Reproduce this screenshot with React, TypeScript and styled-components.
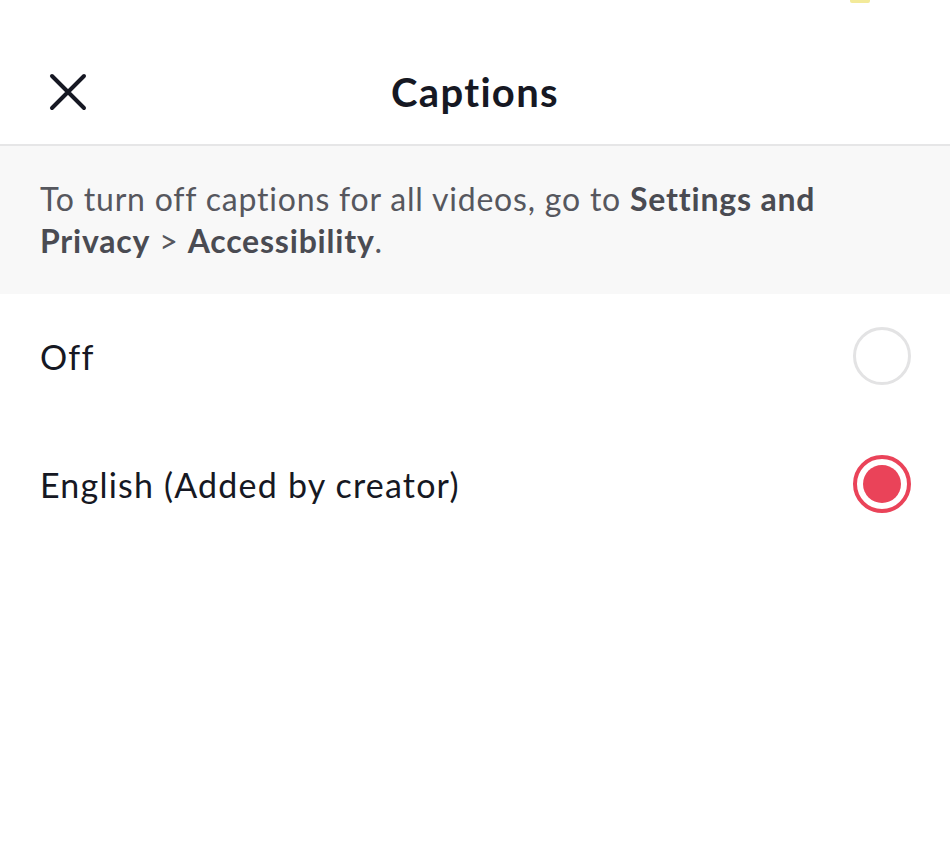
import React, { useState } from 'react';
import styled, { createGlobalStyle } from 'styled-components';

const GlobalStyle = createGlobalStyle`
  html, body {
    margin: 0;
    padding: 0;
    background: #ffffff;
  }
  body {
    font-family: Lato, "Liberation Sans", sans-serif;
    color: #161823;
  }
`;

const options = [
  { id: 'off', label: 'Off' },
  { id: 'en', label: 'English (Added by creator)' },
];

const App: React.FC = () => {
  const [selected, setSelected] = useState('en');

  return (
    <>
      <GlobalStyle />
      <Page>
        <StatusMark />
        <Header>
          <CloseButton aria-label="Close">
            <svg width="38" height="38" viewBox="0 0 38 38">
              <path d="M3 3 L35 35 M35 3 L3 35" stroke="#161823" strokeWidth="4" strokeLinecap="round" />
            </svg>
          </CloseButton>
          <Title>Captions</Title>
        </Header>
        <Notice>
          <NoticeLine>
            To turn off captions for all videos, go to <strong>Settings and</strong>
          </NoticeLine>
          <NoticeLine>
            <strong>Privacy</strong> &gt; <strong>Accessibility</strong>.
          </NoticeLine>
        </Notice>
        <List>
          {options.map(opt => (
            <Row key={opt.id} onClick={() => setSelected(opt.id)}>
              <Label>{opt.label}</Label>
              <Radio checked={selected === opt.id} />
            </Row>
          ))}
        </List>
      </Page>
    </>
  );
};

const Page = styled.div`
  position: relative;
  width: 950px;
  min-height: 865px;
  background: #fff;
`;

const StatusMark = styled.div`
  position: absolute;
  top: 0;
  left: 850px;
  width: 20px;
  height: 3px;
  background: #f3ea9a;
  border-radius: 0 0 2px 2px;
`;

const Header = styled.div`
  position: relative;
  height: 146px;
  padding-top: 40px;
  box-sizing: border-box;
  display: flex;
  align-items: center;
  justify-content: center;
  border-bottom: 2px solid #e6e6e7;
`;

const CloseButton = styled.button`
  position: absolute;
  left: 49px;
  top: 73px;
  padding: 0;
  border: none;
  background: none;
  display: flex;
  cursor: pointer;
`;

const Title = styled.h1`
  margin: 0;
  font-size: 40px;
  font-weight: 700;
  color: #161823;
  letter-spacing: 1.3px;
`;

const Notice = styled.div`
  background: #f8f8f8;
  padding: 32px 40px 32px 40px;
  font-size: 32px;
  line-height: 42px;
  letter-spacing: 0.8px;
  color: #56575e;

  strong {
    font-weight: 700;
    color: #4a4b52;
  }
`;

const NoticeLine = styled.div`
  white-space: nowrap;
`;

const List = styled.div`
  display: flex;
  flex-direction: column;
  gap: 4px;
`;

const Row = styled.div`
  display: flex;
  align-items: center;
  justify-content: space-between;
  height: 124px;
  padding: 0 39px 0 40px;
  cursor: pointer;
`;

const Label = styled.span`
  font-size: 34px;
  letter-spacing: 1.2px;
  color: #161823;
`;

const Radio = styled.span<{ checked: boolean }>`
  width: 58px;
  height: 58px;
  box-sizing: border-box;
  border-radius: 50%;
  border: ${p => (p.checked ? '4px solid #ea4359' : '3px solid #e3e3e4')};
  display: flex;
  align-items: center;
  justify-content: center;

  &::after {
    content: '';
    width: 38px;
    height: 38px;
    border-radius: 50%;
    background: ${p => (p.checked ? '#ea4359' : 'transparent')};
  }
`;

export default App;
